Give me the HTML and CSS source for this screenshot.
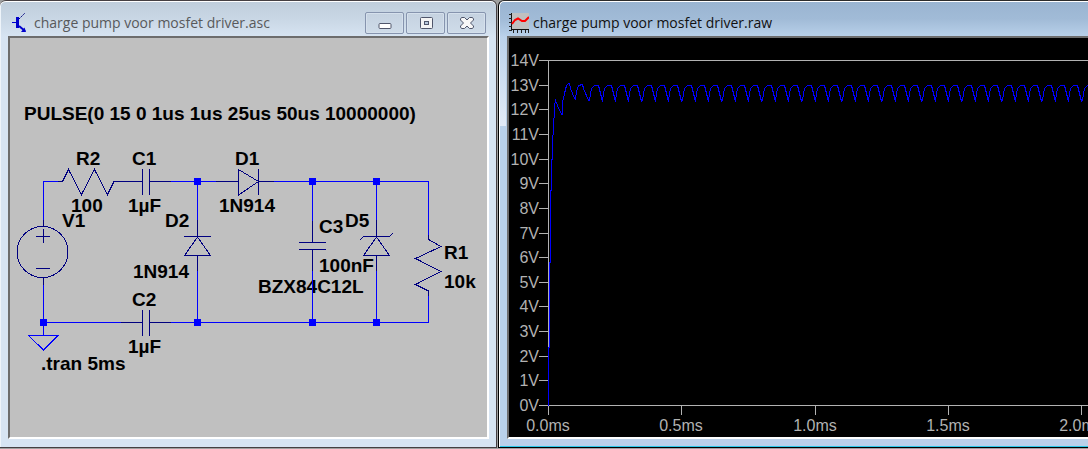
FILE: index.html
```html
<!DOCTYPE html>
<html lang="en">
<head>
<meta charset="utf-8">
<title>charge pump voor mosfet driver</title>
<link rel="stylesheet" href="styles.css">
</head>
<body>
<main class="desktop">
  <section class="window window-schematic">
    <header class="titlebar">
      <svg class="app-icon" width="20" height="20" viewBox="0 0 20 20" aria-hidden="true">
        <path d="M3 9h5v1H3z M7 4h3v11H7z" fill="#00c"/>
        <path d="M10 6L16 0" stroke="#000080" stroke-dasharray="2 1"/>
        <path d="M10 13l6 5" stroke="#00c" stroke-width="2"/>
        <path d="M15.500 14.500l1.500 4.500h-5z" fill="#00c"/>
      </svg>
      <h1 class="title">charge pump voor mosfet driver.asc</h1>
      <div class="controls">
        <button class="control" type="button" aria-label="Minimize">
          <svg width="16" height="14" viewBox="0 0 16 14"><rect x="2" y="7.5" width="12" height="5" rx="1" fill="#fff" stroke="#50566b"/></svg>
        </button>
        <button class="control" type="button" aria-label="Restore">
          <svg width="16" height="14" viewBox="0 0 16 14"><rect x="2.5" y="1.5" width="12" height="11" rx="1" fill="#f4f4f4" stroke="#50566b"/><rect x="6.5" y="5.5" width="4" height="3" fill="#b9c9dc" stroke="#50566b"/></svg>
        </button>
        <button class="control" type="button" aria-label="Close">
          <svg width="16" height="14" viewBox="0 0 16 14"><path d="M2.500 1.500h3L8 4l2.500-2.500h3l1 1.500v1L11.500 7l3 3v1l-1 1.500h-3L8 10l-2.500 2.500h-3l-1-1.500v-1l3-3-3-3V3z" fill="#f8f8f8" stroke="#50566b" stroke-linejoin="round"/></svg>
        </button>
      </div>
    </header>
    <div class="client client-schematic">
      <svg class="schematic" width="477" height="399" viewBox="10 38 477 399" role="img" aria-label="Charge pump schematic">
        <g class="label">
          <text x="24" y="120">PULSE(0 15 0 1us 1us 25us 50us 10000000)</text>
          <text x="76" y="165">R2</text>
          <text x="71" y="212">100</text>
          <text x="132" y="165">C1</text>
          <text x="128" y="212">1µF</text>
          <text x="62" y="227">V1</text>
          <text x="235" y="165">D1</text>
          <text x="219" y="212">1N914</text>
          <text x="165" y="227">D2</text>
          <text x="133" y="278">1N914</text>
          <text x="319" y="233">C3</text>
          <text x="319" y="272">100nF</text>
          <text x="345" y="227">D5</text>
          <text x="258" y="293">BZX84C12L</text>
          <text x="444" y="259">R1</text>
          <text x="444" y="288">10k</text>
          <text x="132" y="306">C2</text>
          <text x="128" y="353">1µF</text>
          <text x="41" y="370">.tran 5ms</text>
        </g>
        <path class="wire" d="M43.500 226V181.500H62 M171 181.500H216 M274 181.500H428.500V235 M428.500 296V322.500H171 M121 322.500H43.500 M43.500 285V335.500 M197.500 181.500V220 M197.500 271V322.500 M312.500 181.500V221 M312.500 271V322.500 M376.500 181.500V220 M376.500 271V322.500 M28.500 335.500H58L43.500 350z"/>
        <g class="part">
          <path d="M58 181.500H62.500L68.500 169.500L81.500 194.500L94.500 169.500L107.500 194.500L114 181.500H142.500"/>
          <path d="M142.500 169V195 M149.500 169V195 M149.500 181.500H171"/>
          <path d="M216 181.500H238.500 M238.500 169V195L258.500 181.500L238.500 169.500 M258.500 169V195 M258.500 181.500H274"/>
          <circle cx="42.500" cy="252" r="25.500"/>
          <path d="M43.500 220V226 M36 236.500H50 M43.500 229V243 M36 268.500H50 M43.500 278V285"/>
          <path d="M197.500 220V237 M184 236.500H211 M197.500 237L184.500 255.500H210.500z M197.500 255V271"/>
          <path d="M312.500 221V242 M299 242.500H326 M299 249.500H326 M312.500 250V271"/>
          <path d="M376.500 220V237 M360 240L363.500 236.500H389.500L393 233 M376.500 237L363.500 255.500H389.500z M376.500 255V271"/>
          <path d="M428.500 235V239.500L441 246.500L415.500 258.500L441 271.500L415.500 284.500L428.500 291V296"/>
          <path d="M121 322.500H142.500 M142.500 310V336 M149.500 310V336 M149.500 322.500H171"/>
        </g>
        <path class="node" d="M194 178h7v7h-7z M309 178h7v7h-7z M373 178h7v7h-7z M40 319h7v7h-7z M194 319h7v7h-7z M309 319h7v7h-7z M373 319h7v7h-7z"/>
      </svg>
    </div>
  </section>

  <section class="window window-plot">
    <header class="titlebar">
      <svg class="app-icon" width="20" height="20" viewBox="0 0 20 20" aria-hidden="true">
        <path d="M3 0h17v17H3z" fill="#c0c0c0"/>
        <path d="M2.500 0V18 M2 16.500H20" stroke="#111" fill="none"/>
        <path d="M0 1.500h3 M0 5.500h3 M0 9.500h3 M0 13.500h3 M0 17.500h3 M4.500 17v3 M8.500 17v3 M12.500 17v3 M16.500 17v3 M19.500 17v3" stroke="#222"/>
        <path d="M3 11L6 7L9 5.500L13 8H16L20 4" stroke="#f00" stroke-width="2" fill="none"/>
      </svg>
      <h1 class="title">charge pump voor mosfet driver.raw</h1>
    </header>
    <div class="client client-plot" id="client">
      <svg class="plot" id="plot" height="399" role="img" aria-label="Output voltage against time">
        <path id="axes" class="axis"/>
        <g id="ticks" class="tick"></g>
        <path id="trace" class="trace"/>
      </svg>
    </div>
  </section>
</main>
<script src="plot.js"></script>
</body>
</html>
```

FILE: styles.css
```css
* {
  box-sizing: border-box;
}

body {
  margin: 0;
  min-height: 100vh;
  background: #a0a0a0;
  font-family: "Open Sans", "Noto Sans", sans-serif;
  overflow: hidden;
}

.desktop {
  display: flex;
  align-items: flex-start;
  gap: 1px;
}

.window {
  border: 1px solid #453f42;
  border-radius: 6px 6px 0 0;
}

.window-schematic {
  flex: none;
  border-left: 0;
  padding: 0 7px 8px 8px;
  background: linear-gradient(#bfcddb 0, #c9d7e5 18px, #d7e4f2 36px);
  box-shadow: inset 0 1px #fff, inset 1px 0 #eef4fa;
}

.window-plot {
  flex: 1;
  min-width: 0;
  border-right: 0;
  border-color: #2b2b2b #000 #000;
  border-top-right-radius: 0;
  padding: 0 0 8px 8px;
  background:
    linear-gradient(#99b4d100 0, #e2ebf7 100%) 1px 30px / 6px 95px no-repeat,
    linear-gradient(#99b4d1 0, #a1bbd7 18px, #b9d1ea 36px);
  box-shadow: inset 0 1px #fff, inset 1px 0 #fff, inset 0 -1px #28c8e8;
}

.titlebar {
  display: flex;
  align-items: center;
  height: 35px;
  padding: 8px 3px 0 2px;
}

.app-icon {
  flex: none;
  margin-right: 4px;
}

.window-schematic .app-icon {
  margin-left: -1px;
  margin-right: 5px;
}

.title {
  flex: 1;
  margin: 0;
  font-size: 14px;
  line-height: 20px;
  font-weight: 400;
  white-space: nowrap;
  color: #111;
}

.window-schematic .title {
  color: #58595b;
}

.controls {
  display: flex;
  gap: 2px;
}

.control {
  display: flex;
  align-items: center;
  justify-content: center;
  width: 39px;
  height: 22px;
  padding: 0;
  border: 1px solid #8694ae;
  border-radius: 2px;
  background: linear-gradient(#c5d2e0, #cfdce9);
  box-shadow: inset 0 0 0 1px #d5e0ec;
}

.client {
  border: 2px solid #fff;
  border-top-color: #6d6d6d;
  border-left-color: #6d6d6d;
  overflow: hidden;
}

.client-schematic {
  background: #c0c0c0;
}

.client-plot {
  border-right: 0;
  background: #000;
}

.schematic,
.plot {
  display: block;
}

.plot {
  width: 100%;
}

.label {
  font: bold 19px "Liberation Sans", Arial, sans-serif;
  fill: #000;
}

.wire,
.part,
.axis,
.trace {
  fill: none;
  shape-rendering: crispEdges;
}

.wire {
  stroke: #00f;
}

.part {
  stroke: #000080;
}

.node {
  fill: #00f;
}

.axis {
  stroke: #b2b2b2;
}

.tick {
  font: 16px "Liberation Sans", Arial, sans-serif;
  fill: #b2b2b2;
}

.tick-y {
  text-anchor: end;
}

.tick-x {
  text-anchor: middle;
}

.trace {
  stroke: #00f;
}
```

FILE: plot.js
```javascript
const LEFT = 39;
const TOP = 22;
const BOTTOM = 367;
const MAX_VOLT = 14;
const HALF_MS = 133.25;

const plot = document.getElementById("plot");
const ticks = document.getElementById("ticks");

// Start-up, as [x, y] from the top-left of the axes
const startup = [
  [0, 345], [0, 287], [1, 287], [1, 202], [2, 202], [2, 130],
  [3, 130], [3, 99], [4, 99], [4, 75], [5, 74], [5, 58],
  [6, 57], [6, 45], [7, 40], [9, 45], [13, 54], [14, 54],
  [14, 42], [16, 33], [18, 25], [20, 23], [21, 23], [22, 28],
  [26, 38], [27, 39], [28, 31], [30, 25], [34, 24], [35, 28], [40, 40],
];
// One ripple per pulse period
const cycle = [[0, 40], [1, 33], [2, 28], [4, 26], [5, 25], [9, 25], [10, 29], [12, 37], [13, 41]];
const period = HALF_MS / 10;

function addTick(x, y, className, text) {
  const node = document.createElementNS("http://www.w3.org/2000/svg", "text");
  node.setAttribute("x", x);
  node.setAttribute("y", y);
  node.setAttribute("class", className);
  node.textContent = text;
  ticks.appendChild(node);
}

function draw() {
  const right = plot.clientWidth;
  ticks.replaceChildren();

  let axes = `M${right} ${TOP + 0.5}H${LEFT + 0.5}V${BOTTOM + 0.5}H${right}`;
  for (let v = 0; v <= MAX_VOLT; v++) {
    const y = Math.round(BOTTOM - (v * (BOTTOM - TOP)) / MAX_VOLT);
    axes += `M${LEFT - 9} ${y + 0.5}H${LEFT}`;
    addTick(LEFT - 9, y + 6, "tick-y", `${v}V`);
  }
  for (let i = 0; LEFT + i * HALF_MS < right; i++) {
    const x = Math.round(LEFT + i * HALF_MS);
    axes += `M${x + 0.5} ${BOTTOM}V${BOTTOM + 10}`;
    addTick(x, BOTTOM + 26, "tick-x", `${(i / 2).toFixed(1)}ms`);
  }
  document.getElementById("axes").setAttribute("d", axes);

  const points = startup.slice();
  for (let start = 40.5; LEFT + start < right; start += period) {
    for (const [dx, y] of cycle) points.push([Math.round(start + dx), y]);
  }
  document.getElementById("trace").setAttribute(
    "d",
    "M" + points.map(([x, y]) => `${LEFT + x + 0.5} ${TOP + y + 0.5}`).join("L")
  );
}

draw();
window.addEventListener("resize", draw);
```
